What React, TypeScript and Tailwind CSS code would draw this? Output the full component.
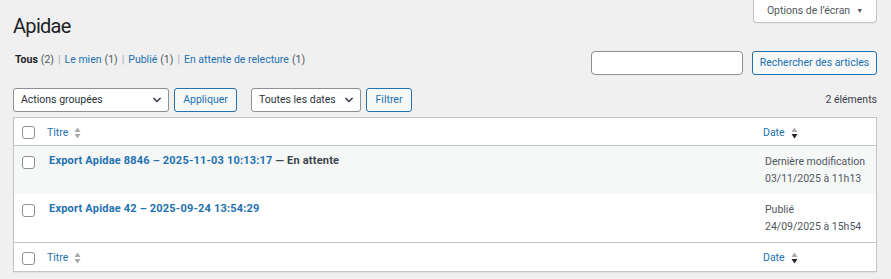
import React from "react";

function Chevron() {
  return (
    <svg width="12" height="12" viewBox="0 0 20 20" className="text-[#2c3338] shrink-0">
      <path d="M5 6l5 5 5-5 2 1-7 7-7-7z" fill="currentColor" />
    </svg>
  );
}

function SortIcon({ active }: { active?: boolean }) {
  return (
    <svg width="7" height="12" viewBox="0 0 7 12" className="ml-[6px] shrink-0">
      <path d="M3.5 0.5L6.5 5H0.5Z" fill="#a7aaad" />
      <path d="M3.5 11.5L6.5 7H0.5Z" fill={active ? "#1d2327" : "#a7aaad"} />
    </svg>
  );
}

function Checkbox() {
  return <span className="block w-[13px] h-[13px] border border-[#8c8f94] rounded-[3px] bg-white" />;
}

function Select({ label, width }: { label: string; width: string }) {
  return (
    <div className={`${width} h-[24px] bg-white border border-[#8c8f94] rounded-[3px] flex items-center justify-between pl-[7px] pr-[5px] text-[#2c3338] whitespace-nowrap`}>
      <span>{label}</span>
      <Chevron />
    </div>
  );
}

function Button({ label, className = "" }: { label: string; className?: string }) {
  return (
    <div className={`h-[24px] border border-[#2271b1] rounded-[3px] bg-[#f6f7f7] text-[#2271b1] flex items-center justify-center whitespace-nowrap ${className}`}>
      {label}
    </div>
  );
}

function Pipe() {
  return <span className="text-[#a7aaad] mx-[4px]">|</span>;
}

function HeadRow({ border }: { border?: boolean }) {
  return (
    <div className={`flex items-center h-[28px] pt-[2px] ${border ? "border-b border-[#c3c4c7]" : ""}`}>
      <div className="w-[33px] pl-[8px]"><Checkbox /></div>
      <div className="flex-1 flex items-center text-[#2271b1]">Titre<SortIcon /></div>
      <div className="w-[113px] flex items-center text-[#2271b1]">Date<SortIcon active /></div>
    </div>
  );
}

function Row({ title, state, l1, l2, bg, border }: { title: string; state?: string; l1: string; l2: string; bg?: boolean; border?: boolean }) {
  return (
    <div className={`flex items-start ${bg ? "bg-[#f6f7f7]" : "bg-white"} ${border ? "border-b border-[#c3c4c7] h-[49px]" : "h-[48px]"}`}>
      <div className="w-[33px] pl-[8px] pt-[10px]"><Checkbox /></div>
      <div className="flex-1 pt-[7px] pl-[2px] leading-[16px] font-bold text-[11px] tracking-[0.2px] text-[#2271b1]">
        {title}
        {state && <span className="text-[#3c434a]"> — {state}</span>}
      </div>
      <div className="w-[113px] pt-[7px] pl-[2px] leading-[17px] text-[#50575e]">
        <div>{l1}</div>
        <div>{l2}</div>
      </div>
    </div>
  );
}

export default function App() {
  return (
    <div className="w-[891px] h-[279px] bg-[#f0f0f1] text-[#3c434a] text-[10.5px] leading-[16px] overflow-hidden whitespace-nowrap font-[family-name:Roboto,sans-serif] px-[13px] pr-[14px]">
      <div className="flex items-start justify-between">
        <h1 className="mt-[16px] text-[20px] leading-[20px] tracking-[-0.7px] text-[#1d2327] font-normal">Apidae</h1>
        <div className="w-[124px] h-[23px] bg-white border border-t-0 border-[#c3c4c7] rounded-b-[4px] flex items-center justify-center gap-[6px] text-[#50575e] shadow-[0_1px_1px_rgba(0,0,0,0.04)]">
          <span>Options de l’écran</span>
          <span className="text-[7px] text-[#50575e]">▼</span>
        </div>
      </div>

      <div className="flex items-start justify-between mt-[15px]">
        <div className="flex items-center h-[16px] mt-[1px] pl-[2px] text-[#50575e]">
          <span className="font-bold text-[#1d2327]">Tous</span>
          <span className="ml-[3px]">(2)</span>
          <Pipe />
          <span className="text-[#2271b1]">Le mien</span>
          <span className="ml-[3px]">(1)</span>
          <Pipe />
          <span className="text-[#2271b1]">Publié</span>
          <span className="ml-[3px]">(1)</span>
          <Pipe />
          <span className="text-[#2271b1]">En attente de relecture</span>
          <span className="ml-[3px]">(1)</span>
        </div>
        <div className="flex items-center gap-[9px]">
          <div className="w-[152px] h-[24px] bg-white border border-[#8c8f94] rounded-[4px]" />
          <Button label="Rechercher des articles" className="w-[125px]" />
        </div>
      </div>

      <div className="flex items-center mt-[13px] h-[24px]">
        <Select label="Actions groupées" width="w-[156px]" />
        <Button label="Appliquer" className="w-[63px] ml-[5px]" />
        <div className="ml-[14px]">
          <Select label="Toutes les dates" width="w-[110px]" />
        </div>
        <Button label="Filtrer" className="w-[46px] ml-[5px]" />
        <span className="ml-auto text-[#3c434a]">2 éléments</span>
      </div>

      <div className="mt-[5px] bg-white border border-[#c3c4c7] shadow-[0_1px_1px_rgba(0,0,0,0.04)]">
        <HeadRow border />
        <Row title="Export Apidae 8846 – 2025-11-03 10:13:17" state="En attente" l1="Dernière modification" l2="03/11/2025 à 11h13" bg />
        <Row title="Export Apidae 42 – 2025-09-24 13:54:29" l1="Publié" l2="24/09/2025 à 15h54" border />
        <HeadRow />
      </div>
    </div>
  );
}
